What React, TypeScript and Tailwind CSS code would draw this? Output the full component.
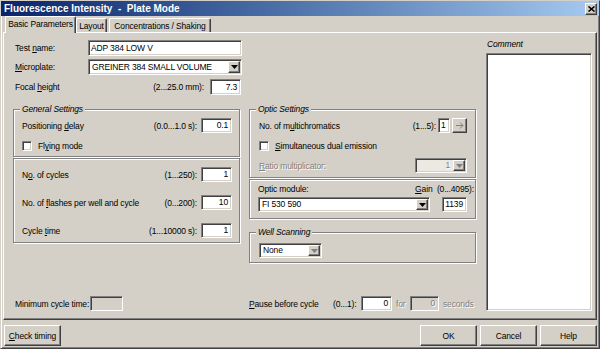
import React from "react"

const sunken = "border border-t-[#808080] border-l-[#808080] border-b-white border-r-white shadow-[inset_1px_1px_0_#404040,inset_-1px_-1px_0_#d4d0c8]"
const raised = "border border-t-white border-l-white border-b-[#404040] border-r-[#404040] shadow-[inset_-1px_-1px_0_#808080]"
const grayText = "text-[#808080] [text-shadow:1px_1px_0_#fff]"

function Edit({ value, className = "", left = false, disabled = false }: { value: string; className?: string; left?: boolean; disabled?: boolean }) {
    return (
        <div className={`${sunken} ${disabled ? "bg-[#d4d0c8]" : "bg-white"} flex items-center ${left ? "justify-start pl-[2px]" : "justify-end pr-[3px]"} leading-none shrink-0 ${className}`}>
            <span className={disabled ? grayText : ""}>{value}</span>
        </div>
    )
}

function DropArrow({ gray = false }: { gray?: boolean }) {
    return (
        <div className={`${raised} bg-[#d4d0c8] w-[12px] h-full flex items-center justify-center shrink-0`}>
            <svg width="7" height="4" viewBox="0 0 7 4">
                <polygon points="0,0 7,0 3.5,4" fill={gray ? "#808080" : "#000"} />
            </svg>
        </div>
    )
}

function Combo({ value, className = "", grayArrow = false, disabled = false }: { value: string; className?: string; grayArrow?: boolean; disabled?: boolean }) {
    return (
        <div className={`${sunken} ${disabled ? "bg-[#ece9e2]" : "bg-white"} flex items-stretch p-[1px] leading-none shrink-0 ${className}`}>
            <div className={`flex-1 flex items-center ${disabled ? "justify-end pr-[3px]" : "pl-[2px]"}`}>
                <span className={disabled ? grayText : ""}>{value}</span>
            </div>
            <DropArrow gray={grayArrow || disabled} />
        </div>
    )
}

function Check({ label }: { label: React.ReactNode }) {
    return (
        <div className="flex items-center h-[10px]">
            <div className={`${sunken} bg-white w-[10px] h-[10px] shrink-0`} />
            <span className="ml-[6px] whitespace-nowrap">{label}</span>
        </div>
    )
}

function Group({ legend, className = "", children }: { legend?: string; className?: string; children?: React.ReactNode }) {
    return (
        <div className={`relative border border-[#808080] shadow-[inset_1px_1px_0_#fff,1px_1px_0_#fff] ${className}`}>
            {legend && (
                <span className="absolute -top-[6px] left-[6px] px-[2px] bg-[#d4d0c8] italic leading-[10px] whitespace-nowrap">{legend}</span>
            )}
            {children}
        </div>
    )
}

function Button({ children, className = "" }: { children: React.ReactNode; className?: string }) {
    return (
        <div className={`${raised} bg-[#d4d0c8] w-[57px] h-[21px] flex items-center justify-center ${className}`}>
            {children}
        </div>
    )
}

export default function App() {
    return (
        <div className="w-[600px] h-[349px] bg-[#d4d0c8] border border-t-[#d4d0c8] border-l-[#d4d0c8] border-r-[#404040] border-b-[#404040] shadow-[inset_1px_1px_0_#fff,inset_-1px_-1px_0_#808080] flex flex-col text-black font-['Liberation_Sans',Arial,sans-serif] text-[8.5px] tracking-[-0.15px] leading-[10px] overflow-hidden">
            {/* Title bar */}
            <div className="h-[15px] flex items-center justify-between pl-[3px] pr-[2px] bg-linear-to-r from-[#0a246a] to-[#a6caf0]">
                <span className="text-white font-bold text-[10px] tracking-normal whitespace-pre">Fluorescence Intensity  -  Plate Mode</span>
                <div className={`${raised} bg-[#d4d0c8] w-[12px] h-[12px] flex items-center justify-center`}>
                    <svg width="7" height="6" viewBox="0 0 7 6">
                        <path d="M0.5 0.5 L6.5 5.5 M6.5 0.5 L0.5 5.5" stroke="#000" strokeWidth="1.6" />
                    </svg>
                </div>
            </div>

            {/* Tabs */}
            <div className="h-[16px] flex items-end pl-[4px]">
                <div className="relative z-10 -mb-px h-[17px] w-[71px] bg-[#d4d0c8] border-t border-l border-r border-t-white border-l-white border-r-[#404040] shadow-[inset_-1px_0_0_#808080] rounded-t-[2px] flex items-center justify-center pb-[2px]">
                    Basic Parameters
                </div>
                <div className="h-[14px] w-[31px] border-t border-l border-r border-t-white border-l-white border-r-[#404040] shadow-[inset_-1px_0_0_#808080] rounded-t-[2px] flex items-center justify-center">
                    Layout
                </div>
                <div className="ml-[2px] h-[14px] w-[102px] border-t border-l border-r border-t-white border-l-white border-r-[#404040] shadow-[inset_-1px_0_0_#808080] rounded-t-[2px] flex items-center justify-center">
                    Concentrations / Shaking
                </div>
            </div>

            {/* Tab panel */}
            <div className={`ml-[2px] w-[594px] h-[288px] ${raised} flex`}>
                <div className="ml-[9px] w-[463px] flex flex-col">
                    <div className="mt-[7px] h-[16px] flex items-center">
                        <span className="pl-[2px] w-[75px] whitespace-nowrap">Test <u>n</u>ame:</span>
                        <Edit value="ADP 384 LOW V" left className="w-[154px] h-[16px]" />
                    </div>
                    <div className="mt-[3px] h-[16px] flex items-center">
                        <span className="pl-[2px] w-[75px] whitespace-nowrap"><u>M</u>icroplate:</span>
                        <Combo value="GREINER 384 SMALL VOLUME" className="w-[154px] h-[16px]" />
                    </div>
                    <div className="mt-[4px] h-[16px] w-[228px] flex items-center justify-between">
                        <span className="pl-[2px] whitespace-nowrap">Focal <u>h</u>eight</span>
                        <div className="flex items-center">
                            <span className="mr-[6px] whitespace-nowrap">(2...25.0 mm):</span>
                            <Edit value="7.3" className="w-[31px] h-[16px]" />
                        </div>
                    </div>

                    <div className="mt-[14px] flex items-start">
                        {/* General settings */}
                        <div className="w-[227px] flex flex-col">
                            <Group legend="General Settings" className="h-[48px] pt-[8px]">
                                <div className="h-[15px] flex items-center justify-between pl-[8px] pr-[7px]">
                                    <span className="whitespace-nowrap">Positioning <u>d</u>elay</span>
                                    <div className="flex items-center">
                                        <span className="mr-[4px] whitespace-nowrap">(0.0...1.0 s):</span>
                                        <Edit value="0.1" className="w-[31px] h-[15px]" />
                                    </div>
                                </div>
                                <div className="mt-[8px] pl-[8px]">
                                    <Check label={<>Fl<u>y</u>ing mode</>} />
                                </div>
                            </Group>
                            <Group className="mt-[1px] h-[85px] pt-[8px] flex flex-col gap-[13px]">
                                {[
                                    { label: <>N<u>o</u>. of cycles</>, range: "(1...250):", value: "1" },
                                    { label: <>No. of <u>f</u>lashes per well and cycle</>, range: "(0...200):", value: "10" },
                                    { label: <>Cycle <u>t</u>ime</>, range: "(1...10000 s):", value: "1" },
                                ].map((row, i) => (
                                    <div key={i} className="h-[15px] flex items-center justify-between pl-[8px] pr-[7px]">
                                        <span className="whitespace-nowrap">{row.label}</span>
                                        <div className="flex items-center">
                                            <span className="mr-[4px] whitespace-nowrap">{row.range}</span>
                                            <Edit value={row.value} className="w-[31px] h-[15px]" />
                                        </div>
                                    </div>
                                ))}
                            </Group>
                        </div>

                        {/* Optic settings + well scanning */}
                        <div className="ml-[9px] w-[227px] flex flex-col">
                            <Group legend="Optic Settings" className="h-[69px] pt-[8px]">
                                <div className="h-[15px] flex items-center justify-between pl-[9px] pr-[8px]">
                                    <span className="whitespace-nowrap">No. of m<u>u</u>ltichromatics</span>
                                    <div className="flex items-center">
                                        <span className="mr-[2px] whitespace-nowrap">(1...5):</span>
                                        <Edit value="1" left className="w-[12px] h-[15px]" />
                                        <div className={`${raised} ml-[2px] w-[15px] h-[15px] flex items-center justify-center`}>
                                            <svg width="8" height="7" viewBox="0 0 8 7">
                                                <path d="M0 3.5 H7 M4 0.5 L7 3.5 L4 6.5" stroke="#808080" strokeWidth="1" fill="none" />
                                            </svg>
                                        </div>
                                    </div>
                                </div>
                                <div className="mt-[8px] pl-[9px]">
                                    <Check label={<><u>S</u>imultaneous dual emission</>} />
                                </div>
                                <div className="mt-[7px] h-[15px] flex items-center justify-between pl-[9px] pr-[8px]">
                                    <span className={`${grayText} whitespace-nowrap`}><u>R</u>atio multiplicator:</span>
                                    <Combo value="1" disabled className="w-[52px] h-[15px]" />
                                </div>
                            </Group>
                            <Group className="mt-[1px] h-[40px] pt-[4px]">
                                <div className="h-[10px] flex items-center justify-between pl-[8px] pr-[1px]">
                                    <span className="whitespace-nowrap">Optic module:</span>
                                    <span className="whitespace-nowrap"><u>G</u>ain&nbsp; (0...4095):</span>
                                </div>
                                <div className="mt-[3px] h-[15px] flex items-center justify-between pl-[8px] pr-[8px]">
                                    <Combo value="FI 530 590" className="w-[172px] h-[15px]" />
                                    <Edit value="1139" className="w-[25px] h-[15px]" />
                                </div>
                            </Group>
                            <Group legend="Well Scanning" className="mt-[13px] h-[31px] pt-[10px] pl-[9px]">
                                <Combo value="None" grayArrow className="w-[63px] h-[15px]" />
                            </Group>
                        </div>
                    </div>

                    {/* Bottom row */}
                    <div className="mt-[33px] h-[15px] flex items-center">
                        <span className="pl-[2px] w-[77px] whitespace-nowrap">Minimum cycle time:</span>
                        <Edit value="" disabled className="w-[33px] h-[15px]" />
                        <span className="ml-[126px] w-[84px] whitespace-nowrap"><u>P</u>ause before cycle</span>
                        <span className="w-[28px] whitespace-nowrap">(0...1):</span>
                        <Edit value="0" className="w-[31px] h-[15px]" />
                        <span className={`${grayText} ml-[4px] w-[14px]`}>for</span>
                        <Edit value="0" disabled className="w-[29px] h-[15px]" />
                        <span className={`${grayText} ml-[4px] whitespace-nowrap`}>seconds</span>
                    </div>
                </div>

                {/* Comment */}
                <div className="ml-[10px] w-[106px] flex flex-col">
                    <span className="mt-[6px] pl-[1px] italic h-[10px]">Comment</span>
                    <div className={`mt-[4px] h-[258px] bg-white ${sunken}`} />
                </div>
            </div>

            {/* Buttons */}
            <div className="mt-[5px] flex items-center">
                <Button className="ml-[3px]"><span><u>C</u>heck timing</span></Button>
                <div className="flex-1" />
                <Button>OK</Button>
                <Button className="ml-[3px]">Cancel</Button>
                <Button className="ml-[3px] mr-[2px]">Help</Button>
            </div>
        </div>
    )
}
